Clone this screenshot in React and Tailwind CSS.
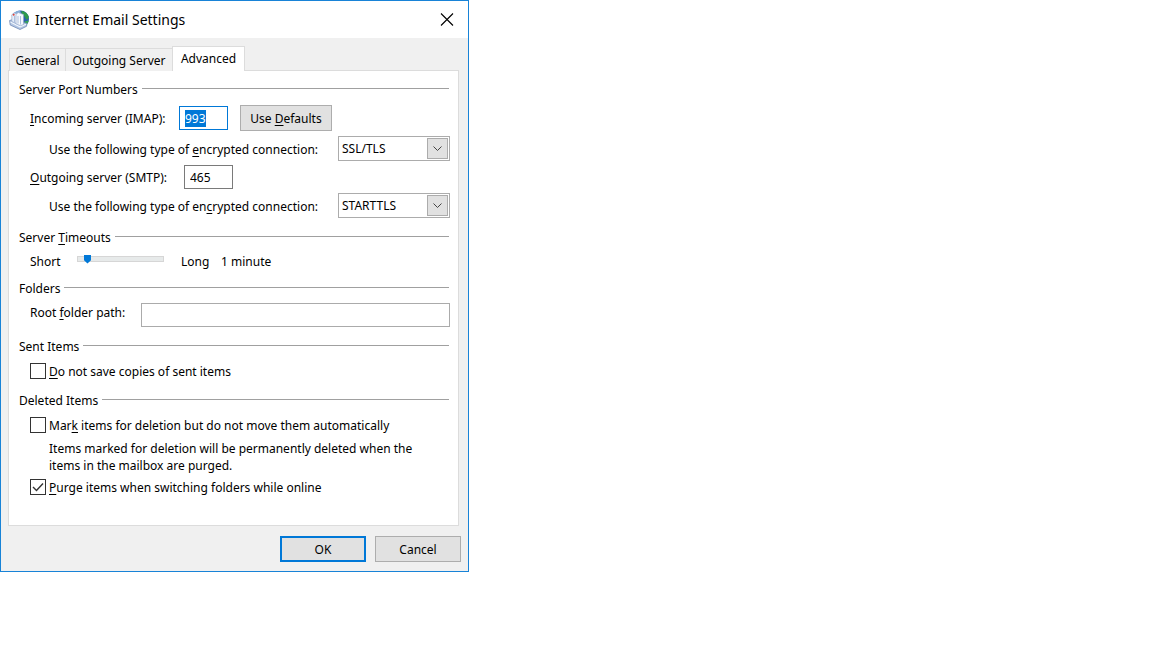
import { useEffect, useRef, useState } from 'react';
import clsx from 'clsx';

const TABS = [
  { name: 'General', width: 'w-14' },
  { name: 'Outgoing Server', width: 'w-[107px]' },
  { name: 'Advanced', width: 'w-[73px]' },
];
const ENCRYPTION_TYPES = ['None', 'SSL/TLS', 'STARTTLS', 'Auto'];

const Key = ({ children }) => (
  <u className="underline decoration-1 underline-offset-2 [text-decoration-skip-ink:none]">{children}</u>
);

const MailIcon = () => (
  <svg viewBox="0 0 20 20" className="size-5" aria-hidden="true">
    <circle cx="11.500" cy="9" r="8.500" fill="#2c5fae" />
    <path d="M2.500 6C4 2.500 7.500.8 11 .6l1 3z" fill="#86add9" />
    <path d="M12.500.7c3.500.5 6.300 2.800 7.300 6-.3 2-1 3-2.300 2.800-1.200-.6-1-2.200-2.300-3.200-1.500-1-3.200-3-2.700-5.600z" fill="#2f9a4c" />
    <path d="M15.500 11.500c1.500-.5 3-.8 4.300-1.300-.4 2.500-1.900 4.800-4.300 6z" fill="#37a653" />
    <path d="M.6 10.500 4 9.500l14 4-.5 2.800-6.500 3.200L1.200 15z" fill="#b4c7e4" stroke="#7189b5" strokeWidth=".8" />
    <path d="M1.500 12 11 16.800l6-2.600" fill="none" stroke="#f2f6fc" strokeWidth="1.200" />
    <path d="M2.800 4.800 5 3l3.500.7v10.300l-5.700-2.500z" fill="#e6eef9" stroke="#8ca0c6" strokeWidth=".6" />
    <path d="M7 4.500 9.200 2.500l5.300 2v10l-3 1.200-4.500-2z" fill="#f5f8fd" stroke="#8fa3c8" strokeWidth=".6" />
    <path d="M9 6v7.500M11.500 6v8.500M5.500 6v6.500" stroke="#a7bad9" strokeWidth=".9" />
    <circle cx="4.700" cy="4.800" r="1" fill="#e0433a" />
  </svg>
);

const SectionTitle = ({ children }) => (
  <h2 className="mr-px flex h-5 items-start gap-1">
    <span className="pt-px">{children}</span>
    <span className="mt-[9px] h-px flex-1 bg-[#a0a0a0]" />
  </h2>
);

const EncryptionSelect = ({ id, defaultValue }) => (
  <div className="relative w-28">
    <select
      id={id}
      defaultValue={defaultValue}
      className="h-[25px] w-full appearance-none border border-[#acacac] bg-white pl-[3px] outline-none"
    >
      {ENCRYPTION_TYPES.map((type) => (
        <option key={type}>{type}</option>
      ))}
    </select>
    <span className="pointer-events-none absolute inset-y-[2px] right-[2px] flex w-[21px] items-center justify-center border border-[#acacac] bg-[#e1e1e1]">
      <svg viewBox="0 0 9 6" className="h-[6px] w-[9px]" fill="none" stroke="#444" aria-hidden="true">
        <path d="M.5.5l4 4 4-4" />
      </svg>
    </span>
  </div>
);

const CheckRow = ({ children, defaultChecked }) => (
  <label className="flex h-5 items-center gap-[3px]">
    <span className="grid size-4 shrink-0">
      <input
        type="checkbox"
        defaultChecked={defaultChecked}
        className="peer col-start-1 row-start-1 size-4 appearance-none border border-[#333] bg-white"
      />
      <svg
        viewBox="0 0 16 16"
        className="pointer-events-none invisible col-start-1 row-start-1 size-4 peer-checked:visible"
        fill="none"
        stroke="#333"
        strokeWidth="1.4"
        aria-hidden="true"
      >
        <path d="M3 8l3.500 3.500L13 4.500" />
      </svg>
    </span>
    <span className="pt-0.5">{children}</span>
  </label>
);

const AdvancedPanel = () => {
  const incomingRef = useRef(null);

  useEffect(() => {
    incomingRef.current.focus();
    incomingRef.current.select();
  }, []);

  return (
    <div className="-mt-px border border-[#dcdcdc] bg-white pt-2 pr-2 pb-7 pl-[10px]">
      <section>
        <SectionTitle>Server Port Numbers</SectionTitle>
        <div className="mt-[6px] ml-[11px] flex items-center">
          <label htmlFor="incoming" className="w-[149px] pt-0.5"><Key>I</Key>ncoming server (IMAP):</label>
          <input
            id="incoming"
            ref={incomingRef}
            type="text"
            defaultValue="993"
            className="h-6 w-[49px] border border-[#0078d7] pl-[5px] outline-none selection:bg-[#0078d7] selection:text-white"
          />
          <button type="button" className="ml-3 h-[26px] w-[92px] border border-[#adadad] bg-[#e1e1e1] pt-0.5">
            Use <Key>D</Key>efaults
          </button>
        </div>
        <div className="mt-[5px] ml-[30px] flex items-center justify-between">
          <label htmlFor="incoming-encryption" className="pt-0.5">
            Use the following type of <Key>e</Key>ncrypted connection:
          </label>
          <EncryptionSelect id="incoming-encryption" defaultValue="SSL/TLS" />
        </div>
        <div className="mt-1 ml-[11px] flex items-center">
          <label htmlFor="outgoing" className="w-[154px] pt-0.5"><Key>O</Key>utgoing server (SMTP):</label>
          <input
            id="outgoing"
            type="text"
            defaultValue="465"
            className="h-6 w-[49px] border border-[#7a7a7a] pl-[5px] outline-none"
          />
        </div>
        <div className="mt-1 ml-[30px] flex items-center justify-between">
          <label htmlFor="outgoing-encryption" className="pt-0.5">
            Use the following type of en<Key>c</Key>rypted connection:
          </label>
          <EncryptionSelect id="outgoing-encryption" defaultValue="STARTTLS" />
        </div>
      </section>

      <section className="mt-[9px]">
        <SectionTitle>
          <label htmlFor="timeout">Server <Key>T</Key>imeouts</label>
        </SectionTitle>
        <div className="mt-[5px] ml-[11px] flex h-5">
          <span className="w-[47px]">Short</span>
          <input
            id="timeout"
            type="range"
            min="0"
            max="13"
            defaultValue="1"
            className="mt-[2px] h-[9px] w-[87px] appearance-none bg-transparent outline-none [&::-webkit-slider-runnable-track]:h-[6px] [&::-webkit-slider-runnable-track]:border [&::-webkit-slider-runnable-track]:border-[#d6d6d6] [&::-webkit-slider-runnable-track]:bg-[#e7eaea] [&::-webkit-slider-thumb]:-mt-[2px] [&::-webkit-slider-thumb]:h-[9px] [&::-webkit-slider-thumb]:w-[7px] [&::-webkit-slider-thumb]:appearance-none [&::-webkit-slider-thumb]:bg-[#0078d7] [&::-webkit-slider-thumb]:[clip-path:polygon(0_0,100%_0,100%_65%,50%_100%,0_65%)]"
          />
          <span className="ml-[17px] w-10">Long</span>
          <output htmlFor="timeout">1 minute</output>
        </div>
      </section>

      <section className="mt-[6px]">
        <SectionTitle>Folders</SectionTitle>
        <div className="mt-[5px] ml-[11px] flex">
          <label htmlFor="root-folder" className="w-[111px]">Root <Key>f</Key>older path:</label>
          <input
            id="root-folder"
            type="text"
            className="h-6 min-w-0 flex-1 border border-[#ababab] px-[5px] outline-none"
          />
        </div>
      </section>

      <section className="mt-[9px]">
        <SectionTitle>Sent Items</SectionTitle>
        <div className="mt-[5px] ml-[11px]">
          <CheckRow><Key>D</Key>o not save copies of sent items</CheckRow>
        </div>
      </section>

      <section className="mt-[9px]">
        <SectionTitle>Deleted Items</SectionTitle>
        <div className="mt-[5px] ml-[11px]">
          <CheckRow>Mar<Key>k</Key> items for deletion but do not move them automatically</CheckRow>
          <p className="mt-[5px] mb-[3px] ml-[19px] max-w-[385px] leading-[17px]">
            Items marked for deletion will be permanently deleted when the items in the mailbox are purged.
          </p>
          <CheckRow defaultChecked><Key>P</Key>urge items when switching folders while online</CheckRow>
        </div>
      </section>
    </div>
  );
};

const App = () => {
  const [activeTab, setActiveTab] = useState('Advanced');

  return (
    <main className="min-h-screen bg-white font-['Noto_Sans','Open_Sans',sans-serif] text-[12px] leading-5 text-black">
      <div role="dialog" aria-labelledby="dialog-title" className="w-full max-w-[469px] border border-[#1883d7] bg-[#f0f0f0]">
        <header className="flex h-[37px] items-center bg-white pr-[14px] pl-2">
          <MailIcon />
          <h1 id="dialog-title" className="ml-[6px] flex-1 text-[14px]">Internet Email Settings</h1>
          <button type="button" aria-label="Close">
            <svg viewBox="0 0 14 14" className="size-[14px]" fill="none" stroke="#000" strokeWidth="1.1" aria-hidden="true">
              <path d="M1 .5l12 12M13 .5l-12 12" />
            </svg>
          </button>
        </header>

        <div className="pt-2 pr-[9px] pl-[7px]">
          <div role="tablist" className="flex items-end pl-px">
            {TABS.map(({ name, width }) => (
              <button
                key={name}
                type="button"
                role="tab"
                aria-selected={activeTab === name}
                onClick={() => setActiveTab(name)}
                className={clsx(
                  'border-[#dcdcdc] whitespace-nowrap',
                  width,
                  activeTab === name
                    ? 'z-10 h-[25px] border-x border-t bg-white pb-px'
                    : 'h-[23px] border-t border-l bg-[#f0f0f0] pt-0.5'
                )}
              >
                {name}
              </button>
            ))}
          </div>
          <AdvancedPanel />
        </div>

        <footer className="flex justify-end gap-[9px] pt-[10px] pr-[7px] pb-[9px]">
          <button type="button" className="h-[26px] w-[86px] border-2 border-[#0078d7] bg-[#e1e1e1] pt-0.5">OK</button>
          <button type="button" className="h-[26px] w-[86px] border border-[#adadad] bg-[#e1e1e1] pt-0.5">Cancel</button>
        </footer>
      </div>
    </main>
  );
};

export default App;
